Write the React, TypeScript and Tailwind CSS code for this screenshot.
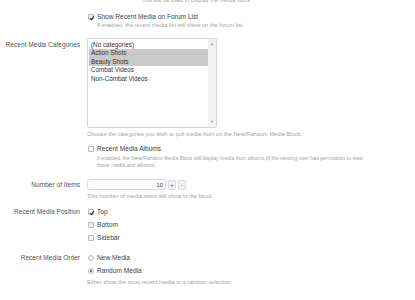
import React from "react";

function Check({ checked }: { checked?: boolean }) {
  return (
    <span className="relative inline-block w-[6px] h-[6px] border border-[#b8b8b8] rounded-[1px] bg-[#f4f4f4] shrink-0">
      {checked && (
        <svg viewBox="0 0 6 6" className="absolute left-0 top-0 w-[6px] h-[6px]">
          <path d="M1 3.2 L2.4 4.6 L5 1.2" stroke="#333" strokeWidth="1.2" fill="none" />
        </svg>
      )}
    </span>
  );
}

function Radio({ checked }: { checked?: boolean }) {
  return (
    <span className="relative inline-flex items-center justify-center w-[6px] h-[6px] border border-[#bdbdbd] rounded-full bg-[#f4f4f4] shrink-0">
      {checked && <span className="w-[2px] h-[2px] rounded-full bg-[#444]" />}
    </span>
  );
}

const hint = "text-[5.7px] text-[#a3a3a3] leading-[7px] whitespace-nowrap";
const label = "w-[80px] text-right text-[6.6px] text-[#555] whitespace-nowrap";
const opt = "text-[6.6px] text-[#444] whitespace-nowrap";

export default function App() {
  return (
    <div className="w-[415px] h-[300px] bg-white overflow-hidden" style={{ fontFamily: '"Liberation Sans", Arial, sans-serif' }}>
      <div className="h-[4px] -mt-[3px] pl-[143px] text-[5.7px] leading-[7px] text-[#a3a3a3] whitespace-nowrap">
        this will be used to display the media block.
      </div>
      {/* Row A */}
      <div className="flex mt-[11px]">
        <div className="w-[88px]" />
        <div>
          <div className="flex items-center h-[9px] gap-[3px]">
            <Check checked />
            <span className={opt}>Show Recent Media on Forum List</span>
          </div>
          <div className={`${hint} pl-[9px] mt-[0.5px]`}>If enabled, the recent media list will show on the forum list.</div>
        </div>
      </div>
      {/* Row B */}
      <div className="flex mt-[9.5px]">
        <div className={`${label} leading-[9px] pt-[1.5px]`}>Recent Media Categories</div>
        <div className="ml-[7px]">
          <div className="flex w-[130px] h-[90px] border border-[#d6d6d6] rounded-[2px] bg-white">
            <div className="flex-1 pt-[1.5px] pl-[1px]">
              {[
                ["(No categories)", false],
                ["Action Shots", true],
                ["Beauty Shots", true],
                ["Combat Videos", false],
                ["Non-Combat Videos", false],
              ].map(([t, s]) => (
                <div
                  key={t as string}
                  className={`h-[8.6px] leading-[8.6px] pl-[2px] text-[6.3px] text-[#333] whitespace-nowrap ${s ? "bg-[#c9c9c9]" : ""}`}
                >
                  {t as string}
                </div>
              ))}
            </div>
            <div className="w-[8px] bg-[#f1f1f1] flex flex-col justify-between items-center py-[3px]">
              <span className="text-[4px] leading-[4px] text-[#999]">▲</span>
              <span className="text-[4px] leading-[4px] text-[#999]">▼</span>
            </div>
          </div>
          <div className={`${hint} mt-[2.5px]`}>Choose the categories you wish to pull media from on the New/Random Media Block.</div>
        </div>
      </div>
      {/* Row C */}
      <div className="flex mt-[6.5px]">
        <div className="w-[88px]" />
        <div>
          <div className="flex items-center h-[9px] gap-[3px]">
            <Check />
            <span className={opt}>Recent Media Albums</span>
          </div>
          <div className="text-[5.2px] text-[#a3a3a3] leading-[7px] whitespace-nowrap pl-[9px] mt-[1.5px]">
            If enabled, the New/Random Media Block will display media from albums (if the viewing user has permission to view
            <br />
            those media and albums).
          </div>
        </div>
      </div>
      {/* Row D */}
      <div className="flex mt-[10.5px]">
        <div className={`${label} leading-[11px]`}>Number of Items</div>
        <div className="ml-[7px]">
          <div className="flex items-center h-[11px]">
            <div className="w-[79px] h-[11px] border border-[#d8d8d8] rounded-[3px] bg-white text-right pr-[2px] text-[6px] leading-[10px] text-[#333]">
              10
            </div>
            <div className="ml-[2px] w-[8px] h-[10px] border border-[#dcdcdc] rounded-[2px] bg-[#f2f2f2] text-[6px] leading-[8px] text-center text-[#555]">+</div>
            <div className="ml-[1.5px] w-[8px] h-[10px] border border-[#dcdcdc] rounded-[2px] bg-[#f2f2f2] text-[6px] leading-[8px] text-center text-[#555]">-</div>
          </div>
          <div className={`${hint} mt-[2.5px]`}>This number of media items will show in the block.</div>
        </div>
      </div>
      {/* Row E */}
      <div className="flex mt-[5.5px]">
        <div className={`${label} leading-[13px]`}>Recent Media Position</div>
        <div className="ml-[8px]">
          {[
            ["Top", true],
            ["Bottom", false],
            ["Sidebar", false],
          ].map(([t, c]) => (
            <div key={t as string} className="flex items-center h-[13px] gap-[3px]">
              <Check checked={c as boolean} />
              <span className={opt}>{t as string}</span>
            </div>
          ))}
        </div>
      </div>
      {/* Row F */}
      <div className="flex mt-[7px]">
        <div className={`${label} leading-[13px]`}>Recent Media Order</div>
        <div className="ml-[8px]">
          {[
            ["New Media", false],
            ["Random Media", true],
          ].map(([t, c]) => (
            <div key={t as string} className="flex items-center h-[13px] gap-[3px]">
              <Radio checked={c as boolean} />
              <span className={opt}>{t as string}</span>
            </div>
          ))}
          <div className={`${hint} mt-[2px] -ml-[1px]`}>Either show the most recent media or a random selection</div>
        </div>
      </div>
    </div>
  );
}
